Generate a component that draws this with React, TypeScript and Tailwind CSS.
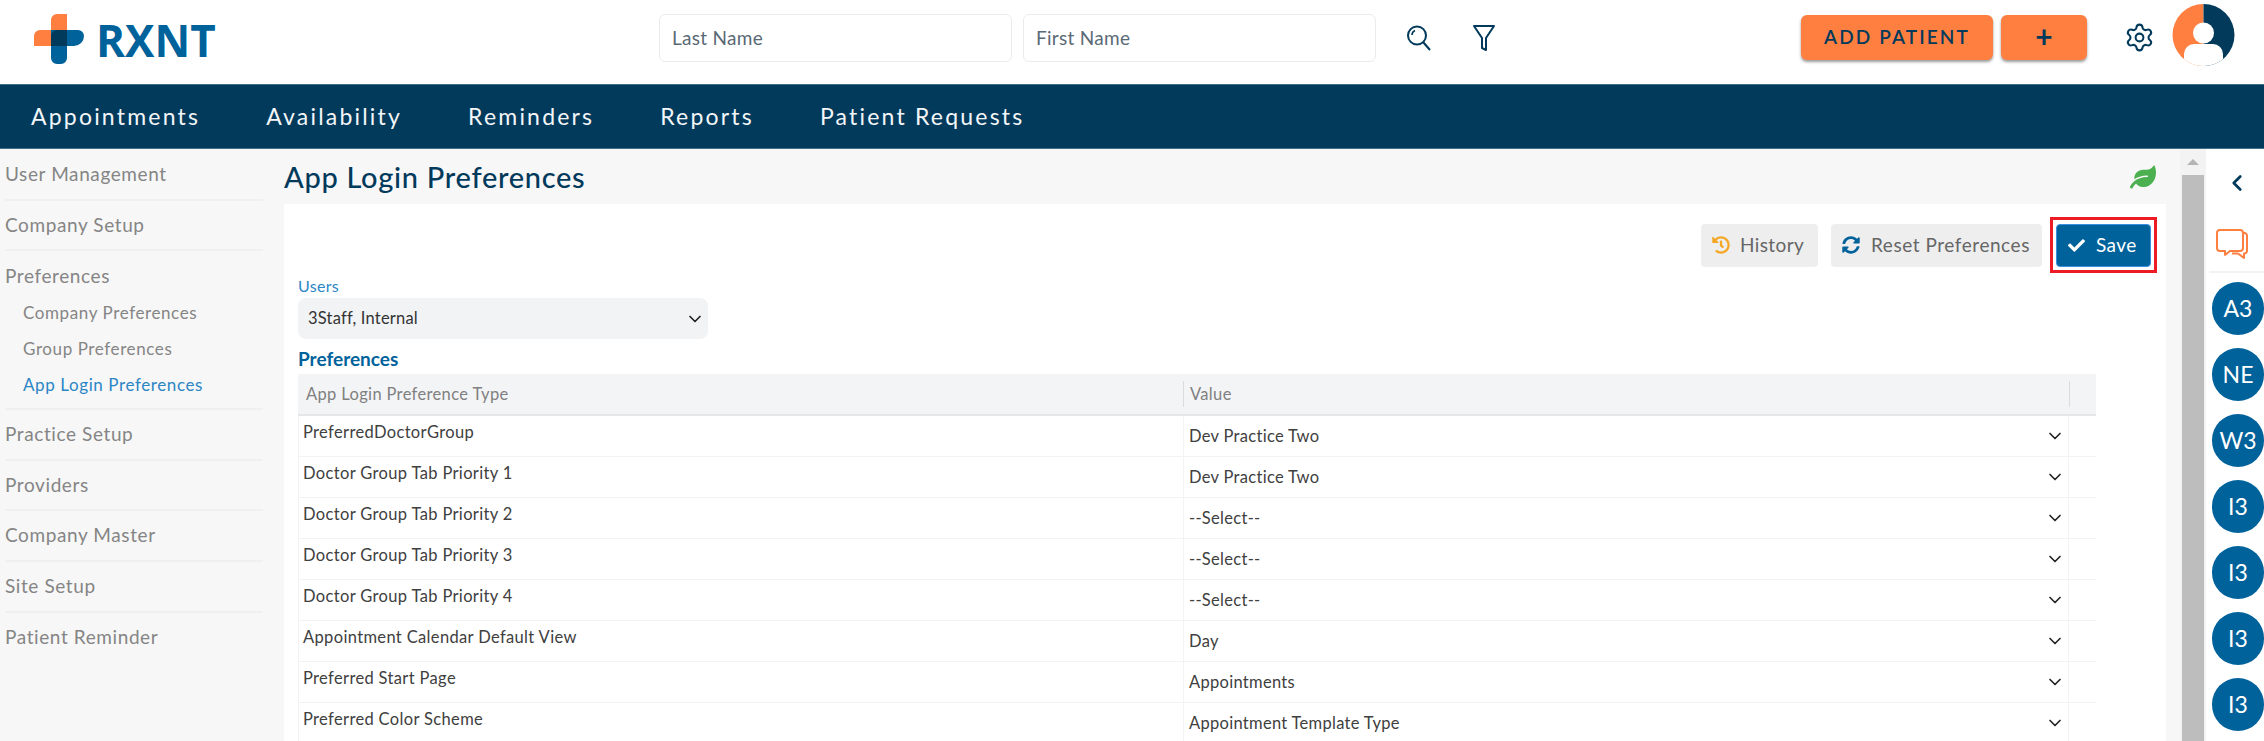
import React from 'react';
import { ChevronDown, ChevronLeft, Settings } from 'lucide-react';
import { FaCheck, FaHistory, FaSyncAlt, FaLeaf } from 'react-icons/fa';

const rows = [
  ['PreferredDoctorGroup', 'Dev Practice Two'],
  ['Doctor Group Tab Priority 1', 'Dev Practice Two'],
  ['Doctor Group Tab Priority 2', '--Select--'],
  ['Doctor Group Tab Priority 3', '--Select--'],
  ['Doctor Group Tab Priority 4', '--Select--'],
  ['Appointment Calendar Default View', 'Day'],
  ['Preferred Start Page', 'Appointments'],
  ['Preferred Color Scheme', 'Appointment Template Type'],
];

const SideItem = ({ label }: { label: string }) => (
  <div className="h-[50.6px] flex items-center border-b-2 border-[#f0f0f0] text-[19px] tracking-[0.6px] text-[#858585]">{label}</div>
);

const SubItem = ({ label, active }: { label: string; active?: boolean }) => (
  <div className={`h-[36px] flex items-center pl-[18px] text-[17px] tracking-[0.6px] ${active ? 'text-[#2b86c5]' : 'text-[#858585]'}`}>{label}</div>
);

const Logo = () => (
  <div className="flex items-center">
    <svg width="50" height="50" viewBox="0 0 50 50" className="mt-[1px]">
      <path d="M17 6a6 6 0 0 1 6-6h10v16H17z M0 22a6 6 0 0 1 6-6h27v16H0z" fill="#ff7f41" />
      <path d="M17 16h27a6 6 0 0 1 6 6v0a10 10 0 0 1-10 10H33v12a6 6 0 0 1-6 6h-4a6 6 0 0 1-6-6z" fill="#00629b" />
      <path d="M23 16h10v16H17V22a6 6 0 0 1 6-6z" fill="#023a5c" />
    </svg>
    <span className="ml-[12px] mt-[2px] text-[44px] leading-none font-bold text-[#00629b] font-['Open_Sans',sans-serif]">RXNT</span>
  </div>
);

const TextBox = ({ label }: { label: string }) => (
  <div className="w-[353px] h-[48px] flex items-center bg-white border border-[#e9ecef] rounded-[6px] pl-[12px] text-[19px] tracking-[0.3px] text-[#5a6a75]">{label}</div>
);

const SearchIcon = () => (
  <svg width="26" height="26" viewBox="0 0 26 26" fill="none" stroke="#023a5c" strokeWidth="2">
    <ellipse cx="11" cy="10.5" rx="9" ry="9" />
    <path d="M17 17l7 8" />
    <path d="M6 10a5 5 0 0 1 3-4.500" strokeWidth="1.600" />
  </svg>
);

const FunnelIcon = () => (
  <svg width="22" height="26" viewBox="0 0 22 26" fill="none" stroke="#023a5c" strokeWidth="2" strokeLinejoin="round">
    <path d="M1 1h20l-8 12v12l-4-2V13z" />
  </svg>
);

const AvatarIcon = () => (
  <svg width="63" height="62" viewBox="0 0 63 62">
    <defs>
      <clipPath id="avatar-clip"><circle cx="31.5" cy="31" r="31" /></clipPath>
    </defs>
    <g clipPath="url(#avatar-clip)">
      <rect x="0" y="0" width="31.5" height="62" fill="#ff7f41" />
      <rect x="31.5" y="0" width="31.5" height="62" fill="#023a5c" />
      <circle cx="31.5" cy="29" r="10.5" fill="#fff" />
      <path d="M12 62V50a10 10 0 0 1 10-10h19a10 10 0 0 1 10 10v12z" fill="#fff" />
    </g>
  </svg>
);

const ChatIcon = () => (
  <svg width="32" height="30" viewBox="0 0 32 30" fill="none" stroke="#ff7f41" strokeWidth="2" strokeLinejoin="round">
    <path d="M4 1h20a3 3 0 0 1 3 3v15a3 3 0 0 1-3 3H14l-5 4v-4H4a3 3 0 0 1-3-3V4a3 3 0 0 1 3-3z" />
    <path d="M27 4h1.500A2.500 2.500 0 0 1 31 6.500V22a2.500 2.500 0 0 1-2.500 2.500H28V29l-6-4.500h-6" />
  </svg>
);

const Bubble = ({ label }: { label: string }) => (
  <div className="w-[52px] h-[53px] shrink-0 rounded-full bg-[#00629b] text-white text-[23px] flex items-center justify-center">{label}</div>
);

export default function App() {
  return (
    <div className="w-[2264px] h-[741px] overflow-hidden flex flex-col bg-[#f7f7f7] font-['Lato','Noto_Sans',sans-serif]">
      <header className="h-[84px] shrink-0 bg-white flex items-start">
        <div className="w-[659px] pl-[34px] pt-[13px]"><Logo /></div>
        <div className="pt-[14px] flex gap-[11px]">
          <TextBox label="Last Name" />
          <TextBox label="First Name" />
        </div>
        <div className="pt-[25px] pl-[30px] flex gap-[41px]">
          <SearchIcon />
          <FunnelIcon />
        </div>
        <div className="ml-[306px] pt-[15px] flex gap-[8px]">
          <div className="w-[192px] h-[45px] rounded-[6px] bg-[#ff7f41] shadow-[0_2px_3px_rgba(0,0,0,0.4)] flex items-center justify-center text-[19px] font-semibold tracking-[2.1px] text-[#023a5c]">ADD PATIENT</div>
          <div className="w-[86px] h-[45px] rounded-[6px] bg-[#ff7f41] shadow-[0_2px_3px_rgba(0,0,0,0.4)] flex items-center justify-center pb-[3px] text-[30px] leading-none font-bold text-[#023a5c]">+</div>
        </div>
        <div className="pt-[22px] pl-[37px]"><Settings size={31} strokeWidth={1.6} color="#023a5c" /></div>
        <div className="pt-[4px] pl-[17px]"><AvatarIcon /></div>
      </header>

      <nav className="h-[65px] shrink-0 bg-[#023a5c] border-y border-[#3f6d88] flex items-center pl-[31px] gap-[66px] text-[23px] tracking-[2.2px] text-[#f3f6f8]">
        <span>Appointments</span>
        <span>Availability</span>
        <span>Reminders</span>
        <span>Reports</span>
        <span>Patient Requests</span>
      </nav>

      <div className="flex-1 flex min-h-0">
        <aside className="w-[284px] shrink-0 pl-[5px] pr-[21px] pt-[1px]">
          <SideItem label="User Management" />
          <SideItem label="Company Setup" />
          <div className="border-b-2 border-[#f0f0f0] h-[159px]">
            <div className="h-[44px] pt-[6px] flex items-center text-[19px] tracking-[0.6px] text-[#858585]">Preferences</div>
            <SubItem label="Company Preferences" />
            <SubItem label="Group Preferences" />
            <SubItem label="App Login Preferences" active />
          </div>
          <SideItem label="Practice Setup" />
          <SideItem label="Providers" />
          <SideItem label="Company Master" />
          <SideItem label="Site Setup" />
          <div className="h-[50px] flex items-center text-[19px] tracking-[0.6px] text-[#858585]">Patient Reminder</div>
        </aside>

        <main className="w-[1882px] shrink-0 flex flex-col min-h-0">
          <div className="h-[55px] shrink-0 flex items-center justify-between pr-[10px]">
            <h1 className="text-[29px] font-medium tracking-[0.7px] text-[#023a5c]">App Login Preferences</h1>
            <FaLeaf size={26} color="#4caf50" />
          </div>
          <div className="flex-1 bg-white pl-[14px] pr-[9px] pt-[13px] overflow-hidden">
            <div className="flex justify-end items-center">
              <div className="w-[117px] h-[43px] rounded-[4px] bg-[#eeeeee] flex items-center pl-[11px] gap-[10px] text-[19px] tracking-[0.4px] text-[#666]">
                <FaHistory size={18} color="#f5a623" />History
              </div>
              <div className="ml-[13px] w-[211px] h-[43px] rounded-[4px] bg-[#eeeeee] flex items-center pl-[11px] gap-[11px] text-[19px] tracking-[0.55px] text-[#666]">
                <FaSyncAlt size={18} color="#00629b" />Reset Preferences
              </div>
              <div className="ml-[8px] w-[107px] h-[56px] border-[3px] border-[#ed1c24] flex items-center justify-center">
                <div className="w-[95px] h-[43px] rounded-[4px] bg-[#00629b] border border-[#3b8fe0] flex items-center pl-[11px] gap-[11px] text-[19px] tracking-[0.4px] text-white">
                  <FaCheck size={17} />Save
                </div>
              </div>
            </div>
            <div className="mt-[3px] text-[16px] leading-[20px] tracking-[0.3px] text-[#2b86c5]">Users</div>
            <div className="mt-[2px] w-[410px] h-[41px] rounded-[8px] bg-[#f2f3f5] flex items-center justify-between pl-[10px] pr-[3px] text-[16.500px] tracking-[0.2px] text-[#333]">
              <span>3Staff, Internal</span>
              <ChevronDown size={20} color="#222" />
            </div>
            <div className="mt-[8px] mb-[2px] h-[25px] flex items-center text-[19px] font-bold text-[#00629b]">Preferences</div>
            <div className="w-[1798px]">
              <div className="h-[42px] bg-[#f3f4f6] border-b-2 border-[#e5e7e8] grid grid-cols-[885px_886px_27px] items-center text-[16.500px] tracking-[0.35px] text-[#808080]">
                <div className="pl-[8px]">App Login Preference Type</div>
                <div className="h-[26px] border-l border-[#dcdcdc] flex items-center pl-[6px]">Value</div>
                <div className="h-[26px] border-l border-[#dcdcdc]"></div>
              </div>
              {rows.map(([name, value]) => (
                <div key={name} className="h-[41px] border-b border-[#f3f3f3] grid grid-cols-[885px_886px_27px] text-[16.500px] tracking-[0.35px] text-[#404040]">
                  <div className="border-l border-[#f3f3f3] pl-[4px] pt-[4px] leading-[24px]">{name}</div>
                  <div className="border-x border-[#f3f3f3] flex items-center justify-between pl-[5px] pr-[3px] tracking-[0.3px]">
                    <span>{value}</span>
                    <ChevronDown size={20} color="#222" />
                  </div>
                  <div></div>
                </div>
              ))}
            </div>
          </div>
        </main>

        <div className="w-[26px] shrink-0 ml-[14px] bg-[#f3f3f3] px-[2px] flex flex-col items-center">
          <div className="h-[26px] flex items-center justify-center">
            <div className="w-0 h-0 border-x-[6px] border-x-transparent border-b-[6px] border-b-[#b5b5b5]"></div>
          </div>
          <div className="w-[22px] flex-1 bg-[#bdbdbd]"></div>
        </div>

        <aside className="flex-1 bg-white flex flex-col overflow-hidden">
          <div className="h-[65px] flex items-center justify-center pt-[2px] pl-[4px]"><ChevronLeft size={26} strokeWidth={2.5} color="#023a5c" /></div>
          <div className="h-[59px] ml-[3px] border-b-2 border-[#f3f3f3] flex items-start pl-[7px] pt-[15px]"><ChatIcon /></div>
          <div className="pl-[6px] pt-[9px] flex flex-col gap-[13px]">
            <Bubble label="A3" />
            <Bubble label="NE" />
            <Bubble label="W3" />
            <Bubble label="I3" />
            <Bubble label="I3" />
            <Bubble label="I3" />
            <Bubble label="I3" />
          </div>
        </aside>
      </div>
    </div>
  );
}
